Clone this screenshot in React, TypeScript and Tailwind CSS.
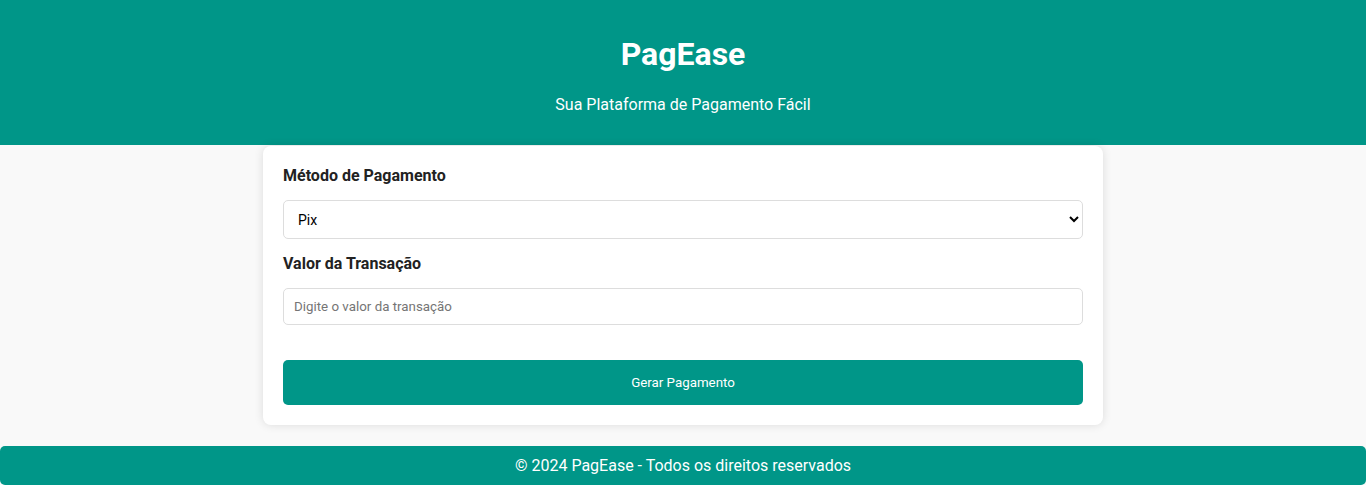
export default function App() {
  return (
    <div className="min-h-screen bg-[#f9f9f9] font-['Roboto',sans-serif] text-[#222]">
      {/* Header */}
      <header className="bg-[#009688] pt-[35px] pb-[31px] text-center text-white">
        <h1 className="text-[32px] font-bold leading-[38px]">PagEase</h1>
        <p className="mt-[22px] text-[16px] leading-[19px]">Sua Plataforma de Pagamento Fácil</p>
      </header>

      {/* Form card */}
      <main className="mx-auto mt-px w-[840px] rounded-lg bg-white p-5 shadow-[0_0_10px_rgba(0,0,0,0.12)]">
        <label className="block text-[16px] font-bold leading-[19px] text-[#222]">Método de Pagamento</label>
        <select
          defaultValue="pix"
          className="mt-[15px] block h-[39px] w-full rounded-[5px] border border-[#ddd] bg-white px-[10px] font-['Roboto',sans-serif] text-[14px] text-black"
        >
          <option value="pix">Pix</option>
          <option value="boleto">Boleto</option>
          <option value="cartao">Cartão de Crédito</option>
        </select>

        <label className="mt-[15px] block text-[16px] font-bold leading-[19px] text-[#222]">Valor da Transação</label>
        <input
          type="text"
          placeholder="Digite o valor da transação"
          className="mt-[15px] block h-[37px] w-full rounded-[5px] border border-[#ddd] px-[10px] text-[13.333px] placeholder:text-[#757575] focus:outline-none"
        />

        <button className="mt-[35px] block h-[45px] w-full rounded-[5px] bg-[#009688] text-[13.333px] text-white">
          Gerar Pagamento
        </button>
      </main>

      {/* Footer */}
      <footer className="mt-[21px] rounded-[5px] bg-[#009688] py-[10px] text-center text-[16px] leading-[19px] text-white">
        © 2024 PagEase - Todos os direitos reservados
      </footer>
    </div>
  );
}
